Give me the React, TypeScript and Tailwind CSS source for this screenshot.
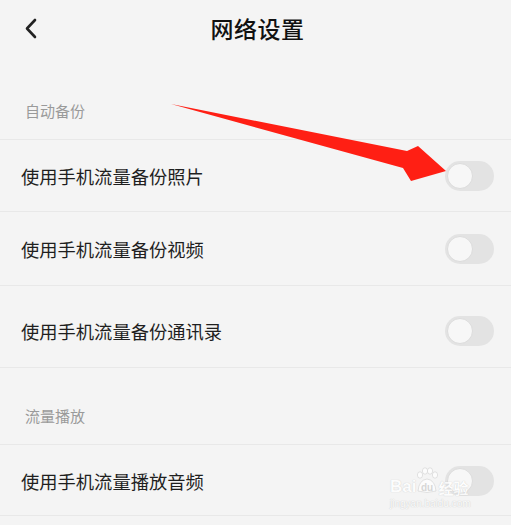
import React from "react";

const font = {
  fontFamily: '"Noto Sans CJK SC", "Noto Sans", sans-serif',
};

type Row = { label: string; height: string; offset?: string };

const backupRows: Row[] = [
  { label: "使用手机流量备份照片", height: "h-[72px]" },
  { label: "使用手机流量备份视频", height: "h-[74px]" },
  { label: "使用手机流量备份通讯录", height: "h-[82px]", offset: "pt-2" },
];

const playRows: Row[] = [{ label: "使用手机流量播放音频", height: "h-[71px]", offset: "pt-0.5" }];

const Toggle = () => (
  <div className="w-[49px] h-[30px] rounded-full bg-[#e3e3e3] flex items-center px-[2px]">
    <div className="w-[26px] h-[26px] rounded-full bg-[#f7f7f7] border border-[#dcdcdc]" />
  </div>
);

const SettingRow = ({ row }: { row: Row }) => (
  <div
    className={`${row.height} ${row.offset ?? ""} flex items-center justify-between pl-[21px] pr-[17px] border-b border-[#e8e8e8]`}
  >
    <span className="text-[18.3px] leading-6 text-[#1f1f1f]">{row.label}</span>
    <Toggle />
  </div>
);

const SectionLabel = ({ text, height }: { text: string; height: string }) => (
  <div className={`${height} flex items-end pl-[25px] pb-[18px] border-b border-[#e8e8e8]`}>
    <span className="text-[15px] leading-5 text-[#9a9a9a]">{text}</span>
  </div>
);

export default function App() {
  return (
    <div className="relative w-[511px] h-[525px] overflow-hidden bg-[#f4f4f4]" style={font}>
      {/* header */}
      <div className="relative h-14 flex items-center justify-center">
        <svg className="absolute left-[24px] top-[18px]" width="14" height="22" viewBox="0 0 14 22">
          <path d="M11 2 L3 10.5 L11 19" fill="none" stroke="#222" strokeWidth="2.6" strokeLinecap="round" strokeLinejoin="round" />
        </svg>
        <h1 className="ml-1 text-[23px] font-medium text-[#111] tracking-[0.5px]">网络设置</h1>
      </div>

      <SectionLabel text="自动备份" height="h-[84px]" />
      {backupRows.map((row) => (
        <SettingRow key={row.label} row={row} />
      ))}

      <SectionLabel text="流量播放" height="h-[77px]" />
      {playRows.map((row) => (
        <SettingRow key={row.label} row={row} />
      ))}

      {/* red annotation arrow */}
      <svg className="absolute inset-0 pointer-events-none" width="511" height="525" viewBox="0 0 511 525">
        <polygon points="171,104 407,151 418,146 446,171 411,181 403,168" fill="#ff1f14" />
      </svg>

      {/* watermark */}
      <div className="absolute left-[390px] top-[467px] flex flex-col items-start pointer-events-none opacity-80">
        <div className="flex items-end leading-none">
          <span className="text-[17px] font-bold text-white [text-shadow:0_0_1px_#bbb]" style={{ fontFamily: '"Liberation Sans", sans-serif' }}>
            Bai
          </span>
          <svg width="24" height="28" viewBox="0 0 24 28" className="-mx-[1px]">
            <g fill="#fff" stroke="#c8c8c8" strokeWidth="0.6">
              <ellipse cx="5" cy="8" rx="2.6" ry="3.2" />
              <ellipse cx="10" cy="4" rx="2.6" ry="3.2" />
              <ellipse cx="15" cy="4" rx="2.6" ry="3.2" />
              <ellipse cx="20" cy="8" rx="2.6" ry="3.2" />
              <path d="M3 24 Q4 13 12 12 Q20 13 21 24 Q12 27 3 24 Z" />
            </g>
            <text x="12" y="24" textAnchor="middle" fontSize="10" fontWeight="700" fill="#d0d0d0" fontFamily="Liberation Sans, sans-serif">
              du
            </text>
          </svg>
          <span className="text-[15px] font-bold text-white [text-shadow:0_0_1px_#bbb]">经验</span>
        </div>
        <span className="text-[10px] leading-3 mt-[3px] text-white [text-shadow:0_0_1px_#aaa]" style={{ fontFamily: '"Liberation Sans", sans-serif' }}>
          jingyan.baidu.com
        </span>
      </div>
    </div>
  );
}
